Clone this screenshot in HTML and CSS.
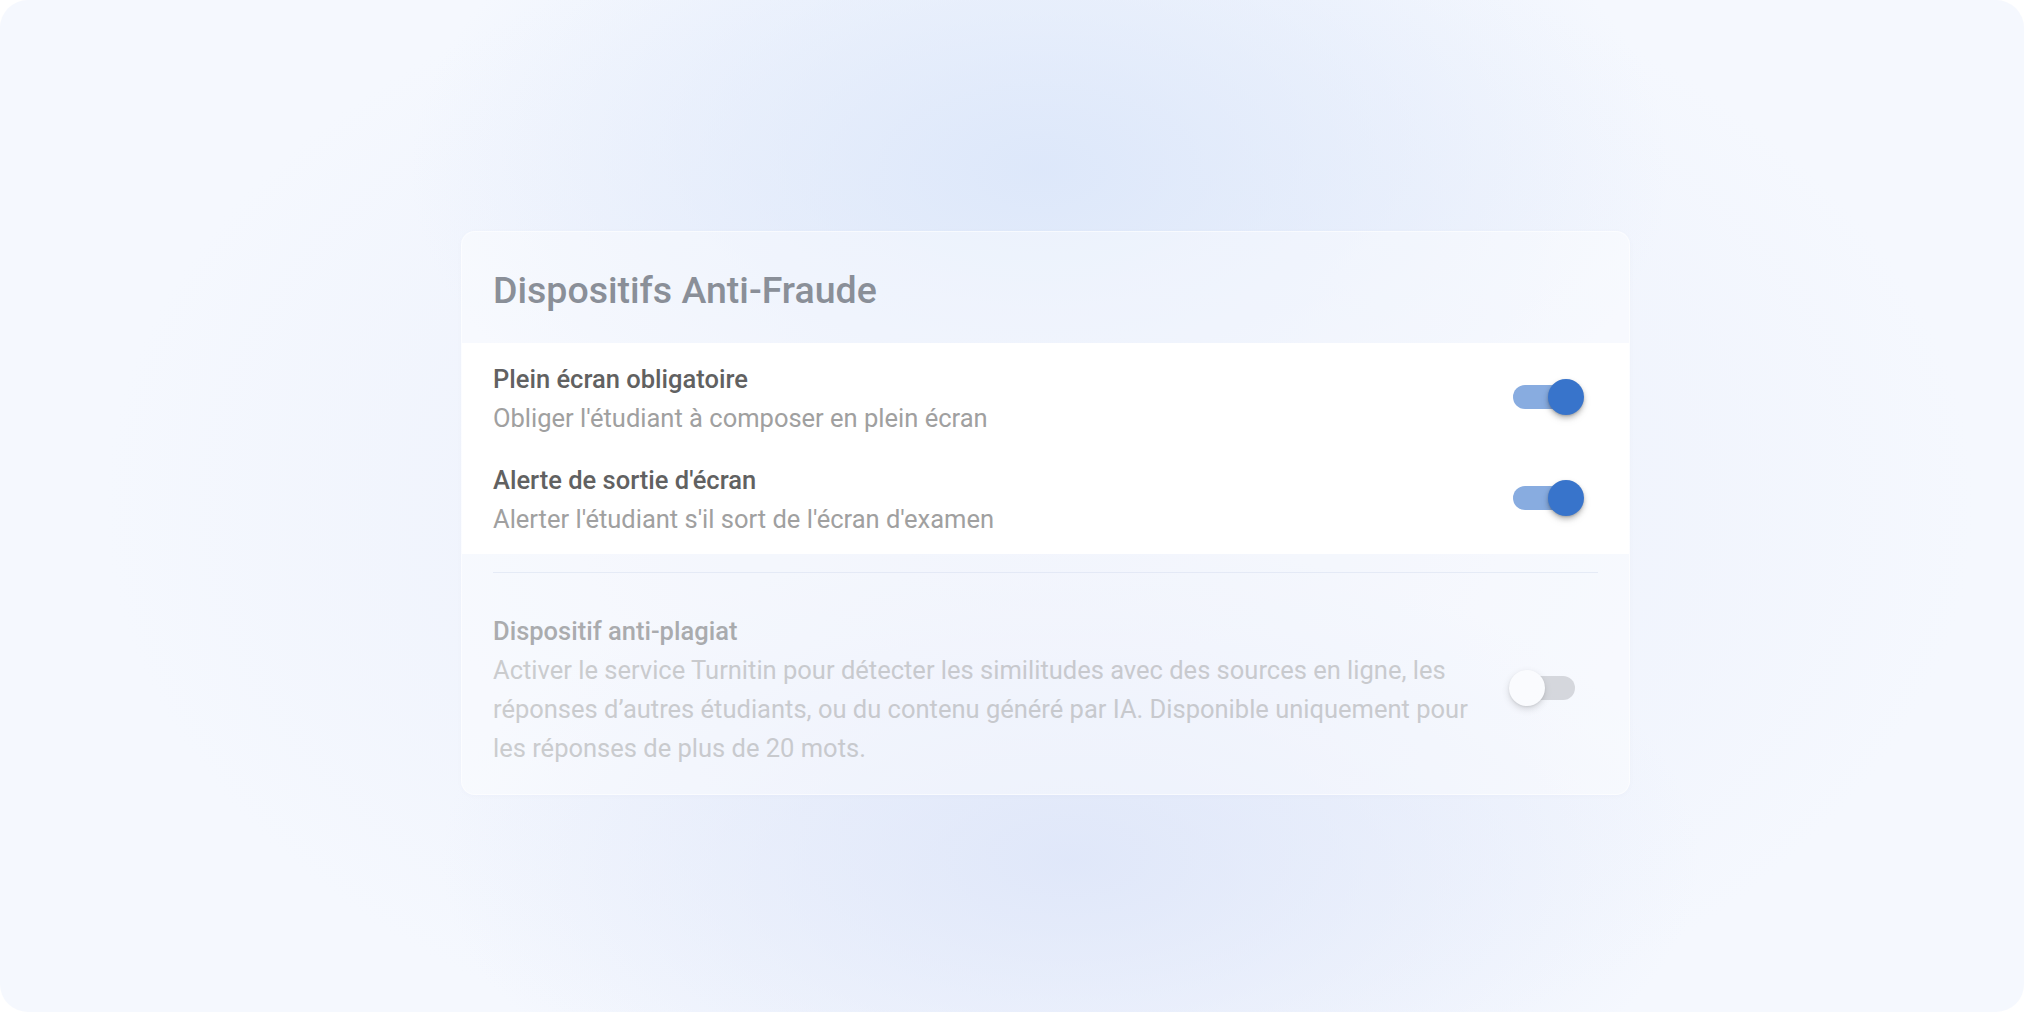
FILE: index.html
```html
<!DOCTYPE html>
<html lang="fr">
<head>
<meta charset="utf-8">
<title>Dispositifs Anti-Fraude</title>
<link rel="stylesheet" href="styles.css">
</head>
<body>
<div class="frame">
  <section class="card">
    <header class="card-head">
      <h2 class="title">Dispositifs Anti-Fraude</h2>
    </header>
    <div class="band">
      <div class="row">
        <div class="text">
          <div class="label">Plein écran obligatoire</div>
          <div class="desc">Obliger l'étudiant à composer en plein écran</div>
        </div>
        <div class="switch on"><span class="track"></span><span class="knob"></span></div>
      </div>
      <div class="row">
        <div class="text">
          <div class="label">Alerte de sortie d'écran</div>
          <div class="desc">Alerter l'étudiant s'il sort de l'écran d'examen</div>
        </div>
        <div class="switch on"><span class="track"></span><span class="knob"></span></div>
      </div>
    </div>
    <div class="lower">
      <div class="divider"></div>
      <div class="row disabled">
        <div class="text wide">
          <div class="label">Dispositif anti-plagiat</div>
          <div class="desc multi">Activer le service Turnitin pour détecter les similitudes avec des sources en ligne, les réponses d’autres étudiants, ou du contenu généré par IA. Disponible uniquement pour les réponses de plus de 20 mots.</div>
        </div>
        <div class="switch off"><span class="track"></span><span class="knob"></span></div>
      </div>
    </div>
  </section>
</div>
</body>
</html>
```
FILE: styles.css
```css
* { box-sizing: border-box; }
html, body { margin: 0; padding: 0; background: #ffffff; }
body { font-family: Roboto, "Noto Sans", "Liberation Sans", sans-serif; }

.frame {
  width: 2024px;
  height: 1012px;
  border-radius: 28px;
  overflow: hidden;
  padding: 231px 0 0 461px;
  background:
    radial-gradient(ellipse 900px 520px at 1040px 170px, rgba(220, 231, 250, 0.95), rgba(220, 231, 250, 0) 70%),
    radial-gradient(ellipse 900px 460px at 1070px 860px, rgba(222, 230, 249, 0.9), rgba(222, 230, 249, 0) 70%),
    radial-gradient(ellipse 1100px 700px at 1040px 506px, #e9eefb, #f5f8fe 85%);
}

.card {
  width: 1169px;
  height: 564px;
  border-radius: 14px;
  background: rgba(255, 255, 255, 0.42);
  border: 1px solid rgba(255, 255, 255, 0.55);
  box-shadow: 0 1px 4px rgba(120, 140, 190, 0.04);
  overflow: hidden;
}

.card-head {
  height: 111px;
  padding: 5px 31px 0;
  display: flex;
  align-items: center;
}
.title {
  margin: 0;
  font-size: 37.5px;
  font-weight: 500;
  color: #8a8f98;
}

.band {
  background: #ffffff;
  padding: 19px 45px 17px 31px;
  display: flex;
  flex-direction: column;
  gap: 27px;
}

.row {
  display: flex;
  align-items: center;
  justify-content: space-between;
}
.text { display: flex; flex-direction: column; }
.text.wide { width: 990px; }
.band .desc { margin-top: 4px; }
.text.wide .desc { margin-top: 2px; }

.label {
  font-size: 25.5px;
  line-height: 35px;
  font-weight: 500;
  color: #616161;
}
.desc {
  font-size: 25.5px;
  line-height: 35px;
  color: #a0a0a0;
}
.desc.multi { line-height: 39px; }

.lower { padding: 18px 31px 27px 31px; }
.divider {
  height: 1px;
  background: rgba(205, 215, 235, 0.4);
  margin-bottom: 41px;
}
.lower .row { padding-right: 14px; }

.disabled { opacity: 0.5; }

.switch {
  position: relative;
  width: 75px;
  height: 36px;
  flex: none;
}
.band .switch { margin-bottom: 4px; }
.lower .switch { margin-bottom: 7px; }
.track {
  position: absolute;
  left: 4px;
  right: 9px;
  top: 6px;
  height: 24px;
  border-radius: 12px;
}
.knob {
  position: absolute;
  top: 0;
  width: 36px;
  height: 36px;
  border-radius: 50%;
  box-shadow: 0 3px 5px rgba(0, 0, 0, 0.22), 0 1px 2px rgba(0, 0, 0, 0.14), 0 4px 10px rgba(0, 0, 0, 0.08);
}
.switch.on .track { background: rgba(56, 116, 203, 0.6); }
.switch.on .knob { right: 0; background: #3874cb; }
.switch.off .track { background: #b5b7bd; }
.switch.off .knob { left: 0; background: #ffffff; box-shadow: 0 3px 6px rgba(0, 0, 0, 0.28), 0 1px 2px rgba(0, 0, 0, 0.16); }
```
